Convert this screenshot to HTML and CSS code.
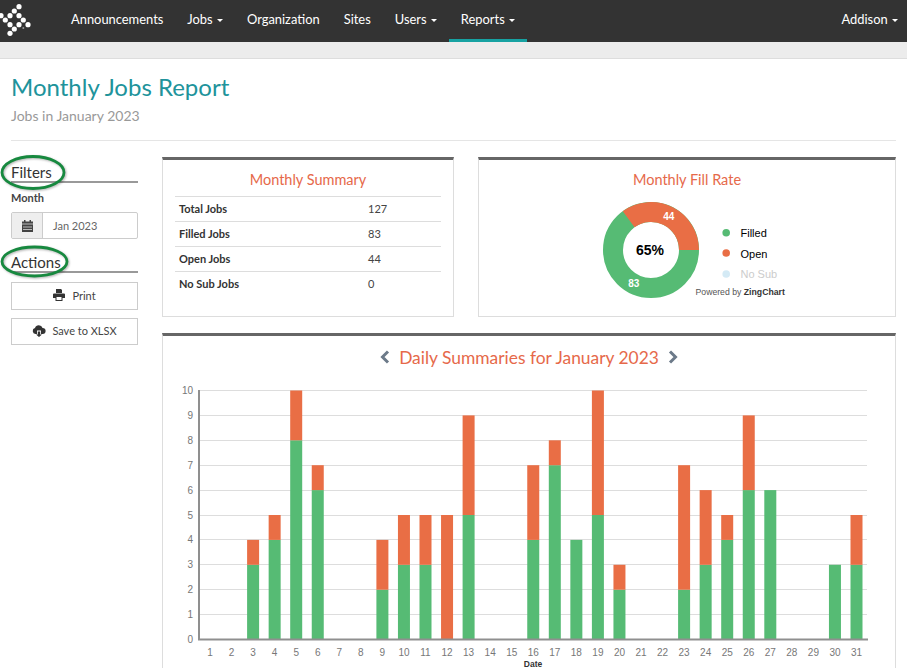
FILE: index.html
```html
<!DOCTYPE html>
<html lang="en">
<head>
<meta charset="utf-8">
<title>Monthly Jobs Report</title>
<link rel="stylesheet" href="styles.css">
</head>
<body>
<nav class="topbar">
  <svg class="logo" width="32" height="38" viewBox="0 0 32 38">
    <g fill="#fff">
      <circle cx="19" cy="6.700" r="2.600"/><circle cx="14.300" cy="11" r="2.600"/>
      <circle cx="10" cy="15.700" r="2.600"/><circle cx="19" cy="15.700" r="2.600"/><circle cx="1" cy="15.700" r="2.600"/>
      <circle cx="5.300" cy="20" r="2.600"/><circle cx="23.300" cy="20" r="2.600"/>
      <circle cx="10" cy="24.700" r="2.600"/><circle cx="19" cy="24.700" r="2.600"/><circle cx="28" cy="24.700" r="2.600"/>
      <circle cx="14.300" cy="29" r="2.600"/><circle cx="10" cy="33.300" r="2.600"/>
      <circle cx="23.300" cy="28" r="1" opacity=".5"/>
    </g>
  </svg>
  <ul class="menu">
    <li>Announcements</li>
    <li>Jobs <span class="caret"></span></li>
    <li>Organization</li>
    <li>Sites</li>
    <li>Users <span class="caret"></span></li>
    <li class="active">Reports <span class="caret"></span></li>
  </ul>
  <div class="user">Addison <span class="caret"></span></div>
</nav>
<div class="subbar"></div>

<main class="page">
  <header class="page-head">
    <h1>Monthly Jobs Report</h1>
    <p>Jobs in January 2023</p>
  </header>

  <div class="layout">
    <aside class="sidebar">
      <section class="side-section">
        <h2>Filters</h2>
        <svg class="ring" width="68" height="38" viewBox="0 0 68 38"><ellipse cx="33" cy="18.500" rx="31" ry="16" fill="none" stroke="#17893f" stroke-width="2.800"/></svg>
        <label>Month</label>
        <div class="month-input">
          <span class="addon">
            <svg width="11" height="12" viewBox="0 0 11 12"><path fill="#444" d="M0 1.500h2V0h1.500v1.500h4V0H9v1.500h2V12H0z"/><path stroke="#eee" stroke-width=".7" d="M0 4h11M1 7h9M1 9.500h9"/></svg>
          </span>
          <span class="value">Jan 2023</span>
        </div>
      </section>
      <section class="side-section actions">
        <h2>Actions</h2>
        <svg class="ring" width="72" height="36" viewBox="0 0 72 36"><ellipse cx="34.500" cy="17.500" rx="32.500" ry="14.500" fill="none" stroke="#17893f" stroke-width="2.800"/></svg>
        <button class="btn btn-print">
          <svg width="12" height="12" viewBox="0 0 12 12"><path fill="#333" d="M3 0h5l1 1v3H3zM1 4.500h10a1 1 0 0 1 1 1V9h-2.500v3h-7V9H0V5.500a1 1 0 0 1 1-1zm2.500 3.500v3h5V8z"/></svg>
          Print
        </button>
        <button class="btn btn-save">
          <svg width="14" height="12" viewBox="0 0 14 12"><path fill="#333" d="M3.500 9A3 3 0 0 1 3 3.100 4 4 0 0 1 10.600 3a3 3 0 0 1 0 6H9L9 5.500H5V9zM5.800 6.500h2.400V9.500H10L7 12 4 9.500h1.800z"/></svg>
          Save to XLSX
        </button>
      </section>
    </aside>

    <div class="content">
      <div class="top-row">
        <section class="card summary">
          <h3>Monthly Summary</h3>
          <table>
            <tr><th>Total Jobs</th><td>127</td></tr>
            <tr><th>Filled Jobs</th><td>83</td></tr>
            <tr><th>Open Jobs</th><td>44</td></tr>
            <tr><th>No Sub Jobs</th><td>0</td></tr>
          </table>
        </section>
        <section class="card fill">
          <h3>Monthly Fill Rate</h3>
          <svg class="donut" width="220" height="115" viewBox="0 0 220 115">
            <circle cx="68" cy="61" r="38" fill="none" stroke="#56bb74" stroke-width="20"/>
            <path fill="#e96e45" d="M39.800 22.200A48 48 0 0 1 116 61H96A28 28 0 0 0 51.540 38.350z"/>
            <text class="d-num" x="85.800" y="31" text-anchor="middle">44</text>
            <text class="d-num" x="50.800" y="98" text-anchor="middle">83</text>
            <text class="d-pct" x="67" y="66" text-anchor="middle">65%</text>
            <circle cx="143.200" cy="43.700" r="3.800" fill="#56bb74"/><text class="d-leg" x="157.500" y="47.500">Filled</text>
            <circle cx="143.200" cy="64" r="3.800" fill="#e96e45"/><text class="d-leg" x="157.500" y="68.500">Open</text>
            <circle cx="143.200" cy="85" r="3.800" fill="#d4eaf5"/><text class="d-leg d-off" x="157.500" y="89">No Sub</text>
            <text class="d-pow" x="112.500" y="106">Powered by <tspan class="d-zing">ZingChart</tspan></text>
          </svg>
        </section>
      </div>

      <section class="card daily">
        <h3 class="daily-title">
          <svg width="10" height="14" viewBox="0 0 10 14"><path fill="none" stroke="#6c7a89" stroke-width="3" d="M8 1.500 2.500 7 8 12.500"/></svg>
          <span>Daily Summaries for January 2023</span>
          <svg width="10" height="14" viewBox="0 0 10 14"><path fill="none" stroke="#6c7a89" stroke-width="3" d="M2 1.500 7.500 7 2 12.500"/></svg>
        </h3>
        <svg id="chart" class="chart" width="732" height="286" viewBox="163 382 732 286"></svg>
      </section>
    </div>
  </div>
</main>
<script src="chart.js"></script>
</body>
</html>
```
FILE: styles.css
```css
* { box-sizing: border-box; }
html, body { margin: 0; padding: 0; }
body {
  width: 907px;
  height: 668px;
  overflow: hidden;
  background: #fff;
  color: #333;
  font-family: Lato, "Liberation Sans", sans-serif;
  font-size: 12px;
}
.topbar {
  height: 42px;
  background: #333;
  display: flex;
  align-items: stretch;
  color: #fff;
  font-size: 12.900px;
}
.logo { flex: none; }
.menu {
  list-style: none;
  margin: 0 0 0 27px;
  padding: 0;
  display: flex;
  flex: 1;
}
.menu li {
  padding: 0 12px;
  line-height: 38px;
  white-space: nowrap;
}
.menu .active { border-bottom: 3px solid #17a2a2; }
.caret {
  display: inline-block;
  width: 0;
  height: 0;
  margin-left: 1px;
  vertical-align: middle;
  border-top: 3px solid #fff;
  border-left: 3px solid transparent;
  border-right: 3px solid transparent;
}
.user { padding-right: 9px; line-height: 38px; }
.subbar {
  height: 17px;
  background: #ececec;
  border-bottom: 1px solid #ddd;
}
.page { padding: 0 11px; }
.page-head {
  height: 82px;
  border-bottom: 1px solid #e5e5e5;
  padding-top: 13px;
}
.page-head h1 {
  margin: 0;
  font-size: 24px;
  font-weight: 400;
  line-height: 29px;
  color: #20939b;
}
.page-head p {
  margin: 6px 0 0;
  font-size: 14px;
  line-height: 17px;
  color: #999;
}
.layout { display: flex; gap: 24px; }
.sidebar { width: 127px; flex: none; padding-top: 21px; }
.side-section { position: relative; }
.side-section h2 {
  margin: 0;
  font-size: 15px;
  font-weight: 400;
  line-height: 21px;
  color: #333;
  border-bottom: 2px solid #999;
  height: 21px;
}
.ring {
  position: absolute;
  left: -11px;
  top: -8px;
  pointer-events: none;
  filter: drop-shadow(1px 1.500px 1px rgba(0, 0, 0, .3));
}
.side-section label {
  display: block;
  font-size: 11px;
  font-weight: 700;
  line-height: 14px;
  margin: 8px 0 7px;
  color: #444;
}
.month-input {
  display: flex;
  height: 27px;
  border: 1px solid #ccc;
  border-radius: 2px;
}
.addon {
  width: 31px;
  background: #eee;
  border-right: 1px solid #ccc;
  display: flex;
  align-items: center;
  justify-content: center;
}
.value { padding-left: 10px; line-height: 25px; font-size: 11px; color: #666; }
.actions { margin-top: 13px; }
.btn {
  display: flex;
  align-items: center;
  justify-content: center;
  gap: 7px;
  width: 127px;
  background: #fff;
  border: 1px solid #ccc;
  font-family: inherit;
  font-size: 11px;
  color: #444;
  padding: 0 0 2px;
}
.btn-print { height: 28px; margin-top: 9px; }
.btn-save { height: 27px; margin-top: 8px; gap: 6px; }
.content { flex: 1; min-width: 0; padding-top: 16px; }
.top-row { display: flex; gap: 24px; }
.card {
  border: 1px solid #ddd;
  border-top: 3px solid #666;
  background: #fff;
}
.card h3 {
  margin: 0;
  text-align: center;
  font-size: 14.500px;
  font-weight: 400;
  line-height: 17px;
  color: #e6694a;
}
.summary { width: 292px; height: 160px; padding: 11px 12px 0; }
.summary h3 { margin-bottom: 8px; }
.summary table {
  width: 100%;
  border-collapse: collapse;
  font-size: 11px;
}
.summary tr { height: 25px; border-top: 1px solid #ddd; }
.summary th { width: 193px; text-align: left; font-weight: 700; padding: 0 0 2px 4px; color: #333; }
.summary td { padding: 0 0 2px; color: #444; }
.fill { flex: 1; height: 160px; padding-top: 11px; }
.donut { display: block; margin: 1px 0 0 103.500px; }
.d-num { font: 700 10px "Liberation Sans", sans-serif; fill: #fff; }
.d-pct { font: 700 14px "Liberation Sans", sans-serif; fill: #000; }
.d-leg { font: 400 11px "Liberation Sans", sans-serif; fill: #000; }
.d-off { fill: #ccc; }
.d-pow { font: 400 8.700px "Liberation Sans", sans-serif; fill: #555; }
.d-zing { font-weight: 700; fill: #333; }
.daily { margin-top: 16px; height: 335px; border-bottom: none; }
.card .daily-title {
  display: flex;
  justify-content: center;
  align-items: center;
  gap: 9px;
  height: 41px;
  padding-top: 1px;
  font-size: 17.400px;
}
.chart { display: block; margin-top: 5px; }
.c-grid { stroke: #ddd; stroke-width: 1; }
.c-axis { stroke: #8f8f8f; stroke-width: 2; fill: none; }
.c-green { fill: #56bb74; }
.c-orange { fill: #e96e45; }
.c-label { font: 400 10px "Liberation Sans", sans-serif; fill: #777; }
.c-xtitle { font: 700 8.500px "Liberation Sans", sans-serif; fill: #333; }
```
FILE: chart.js
```js
var NS = "http://www.w3.org/2000/svg";
var svg = document.getElementById("chart");
var filled = [0,0,3,4,8,6,0,0,2,3,3,0,5,0,0,4,7,4,5,2,0,0,2,3,4,6,6,0,0,3,3];
var open =   [0,0,1,1,2,1,0,0,2,2,2,5,4,0,0,3,1,0,5,1,0,0,5,3,1,3,0,0,0,0,2];
function add(tag, attrs, text) {
  var el = document.createElementNS(NS, tag);
  for (var k in attrs) el.setAttribute(k, attrs[k]);
  if (text !== undefined) el.textContent = text;
  svg.appendChild(el);
  return el;
}
var y0 = 639.5, unit = 24.9, x0 = 210, step = 21.55;
for (var i = 1; i <= 10; i++) {
  var y = Math.round(y0 - 0.5 - i * unit) + 0.5;
  add("line", { "class": "c-grid", x1: 199, x2: 867, y1: y, y2: y });
}
for (var i = 0; i <= 10; i++) {
  add("text", { "class": "c-label", x: 193, y: y0 - i * unit + 3.5, "text-anchor": "end" }, i);
}
filled.forEach(function (f, i) {
  var x = x0 + i * step - 6;
  if (f) add("rect", { "class": "c-green", x: x, y: y0 - f * unit, width: 12, height: f * unit });
  if (open[i]) add("rect", { "class": "c-orange", x: x, y: y0 - (f + open[i]) * unit, width: 12, height: open[i] * unit });
  add("text", { "class": "c-label", x: x0 + i * step, y: 656, "text-anchor": "middle" }, i + 1);
});
add("path", { "class": "c-axis", d: "M199 390V639.500H868" });
add("text", { "class": "c-xtitle", x: 533, y: 667, "text-anchor": "middle" }, "Date");
```
